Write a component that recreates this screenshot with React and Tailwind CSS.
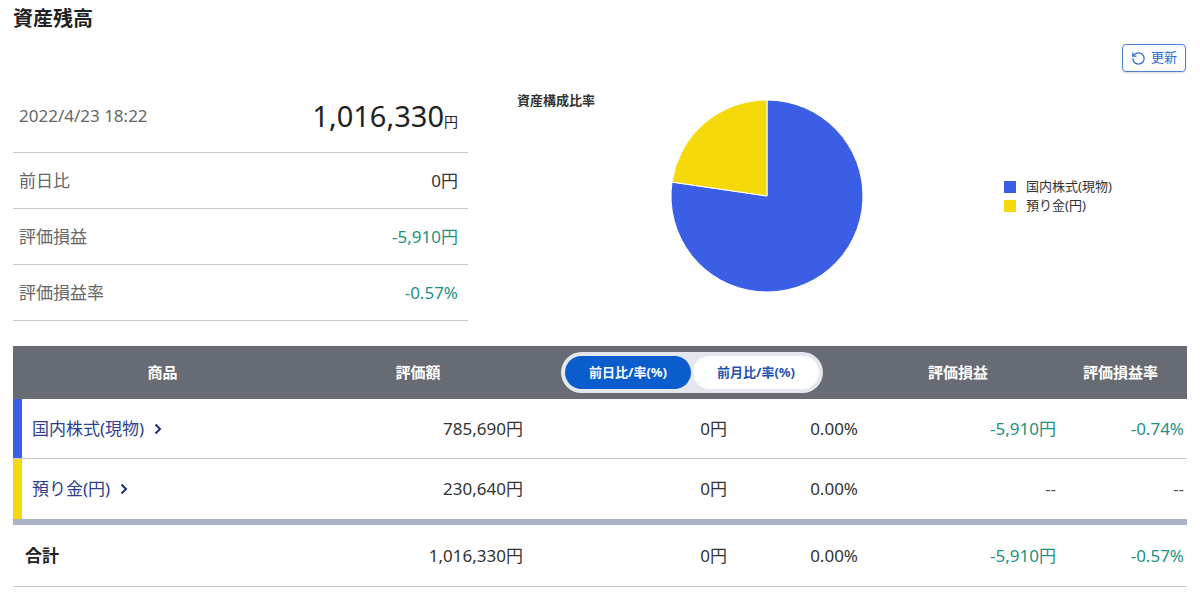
import { RotateCw } from 'lucide-react';

const font = { fontFamily: '"Noto Sans", "Noto Sans CJK JP", sans-serif' };

const summary = [
  { label: '前日比', value: '0円', tone: 'text-[#333]' },
  { label: '評価損益', value: '-5,910円', tone: 'text-[#1f9184]' },
  { label: '評価損益率', value: '-0.57%', tone: 'text-[#1f9184]' },
];

const rows = [
  { name: '国内株式(現物)', bar: 'bg-[#3a5fe5]', value: '785,690円', diff: '0円', rate: '0.00%', pl: '-5,910円', plRate: '-0.74%' },
  { name: '預り金(円)', bar: 'bg-[#f6d90a]', value: '230,640円', diff: '0円', rate: '0.00%', pl: '--', plRate: '--' },
];

function Pie() {
  return (
    <svg width="194" height="194" viewBox="-1 -1 194 194">
      <path d="M96,96 L1,82.1 A96,96 0 1,0 96,0 Z" fill="#3a5fe5" stroke="#fff" strokeWidth="1" />
      <path d="M96,96 L96,0 A96,96 0 0,0 1,82.1 Z" fill="#f6d90a" stroke="#fff" strokeWidth="1" />
    </svg>
  );
}

export default function App() {
  return (
    <div className="w-[1200px] h-[602px] bg-white px-[13px] overflow-hidden" style={font}>
      <h1 className="pt-[5px] text-[20px] leading-[28px] font-bold text-[#222]">資産残高</h1>

      <div className="flex justify-end mt-[11px] pr-[1px]">
        <button className="flex items-center gap-[5px] h-[28px] px-[8px] border border-[#4a7fd8] rounded-[4px] shadow-[0_1px_2px_rgba(0,0,0,0.15)] text-[13px] text-[#2f6bd0]">
          <RotateCw size={15} strokeWidth={2} className="-scale-x-100 text-[#2f6bd0]" />
          更新
        </button>
      </div>

      <div className="flex">
        <div className="w-[455px]">
          <div className="flex items-center justify-between h-[81px] pt-[8px] border-b border-[#c5cad3] pl-[6px] pr-[10px]">
            <span className="text-[17px] text-[#666]">2022/4/23 18:22</span>
            <span className="text-[#222]">
              <span className="text-[29px]">1,016,330</span>
              <span className="text-[14px]">円</span>
            </span>
          </div>
          {summary.map(s => (
            <div key={s.label} className="flex items-center justify-between h-[56px] border-b border-[#c5cad3] pl-[6px] pr-[10px]">
              <span className="text-[17px] text-[#666]">{s.label}</span>
              <span className={`text-[17px] ${s.tone}`}>{s.value}</span>
            </div>
          ))}
        </div>

        <div className="flex-1 flex pl-[49px] pt-[19px]">
          <div className="text-[13px] leading-[18px] font-bold text-[#333]">資産構成比率</div>
          <div className="flex items-center ml-[75px] mt-[8px] self-start">
            <Pie />
            <div className="ml-[140px] text-[13px] leading-[19px] text-[#333]">
              <div className="flex items-center gap-[10px]">
                <span className="w-[12px] h-[12px] bg-[#3a5fe5]" />
                国内株式(現物)
              </div>
              <div className="flex items-center gap-[10px]">
                <span className="w-[12px] h-[12px] bg-[#f6d90a]" />
                預り金(円)
              </div>
            </div>
          </div>
        </div>
      </div>

      <div className="mt-[25px]">
        <div className="grid grid-cols-[298px_232px_335px_198px_1fr] h-[53px] items-center bg-[#676b73] text-white text-[15px] font-bold">
          <div className="text-center pl-[1px]">商品</div>
          <div className="text-center pr-[18px]">評価額</div>
          <div className="pl-[18px]">
            <div className="flex w-[262px] h-[41px] p-[4px] rounded-full bg-[#e4e7ee] text-[13px]">
              <div className="flex-1 flex items-center justify-center rounded-full bg-[#0b5ccc] text-white">前日比/率(%)</div>
              <div className="flex-1 flex items-center justify-center rounded-full bg-white text-[#1d52b3] ml-[2px]">前月比/率(%)</div>
            </div>
          </div>
          <div className="pl-[50px]">評価損益</div>
          <div className="pl-[7px]">評価損益率</div>
        </div>

        {rows.map((r, i) => (
          <div key={r.name} className={`grid grid-cols-[298px_232px_204px_131px_198px_1fr] h-[60px] items-center text-[17px] text-[#333] ${i === 0 ? 'border-b border-[#c5cad3]' : ''}`}>
            <div className="flex items-center h-full">
              <span className={`w-[9px] h-full ${r.bar}`} />
              <span className="ml-[10px] text-[#2d3f8f]">{r.name}</span>
              <span className="ml-[10px] text-[#1e2f7a]">
                <svg width="8" height="12" viewBox="0 0 8 12"><path d="M1.5 1.5 L6 6 L1.5 10.5" fill="none" stroke="currentColor" strokeWidth="2" /></svg>
              </span>
            </div>
            <div className="text-right pr-[20px]">{r.value}</div>
            <div className="text-right pr-[20px]">{r.diff}</div>
            <div className="text-right pr-[20px]">{r.rate}</div>
            <div className={`text-right pr-[20px] ${r.pl === '--' ? 'text-[#555]' : 'text-[#1f9184]'}`}>{r.pl}</div>
            <div className={`text-right pr-[3px] ${r.plRate === '--' ? 'text-[#555]' : 'text-[#1f9184]'}`}>{r.plRate}</div>
          </div>
        ))}

        <div className="h-[6px] bg-[#a9b4c6]" />

        <div className="grid grid-cols-[298px_232px_204px_131px_198px_1fr] h-[62px] items-center text-[17px] text-[#333] border-b border-[#c5cad3]">
          <div className="pl-[12px] font-bold text-[#222]">合計</div>
          <div className="text-right pr-[20px]">1,016,330円</div>
          <div className="text-right pr-[20px]">0円</div>
          <div className="text-right pr-[20px]">0.00%</div>
          <div className="text-right pr-[20px] text-[#1f9184]">-5,910円</div>
          <div className="text-right pr-[3px] text-[#1f9184]">-0.57%</div>
        </div>
      </div>
    </div>
  );
}
